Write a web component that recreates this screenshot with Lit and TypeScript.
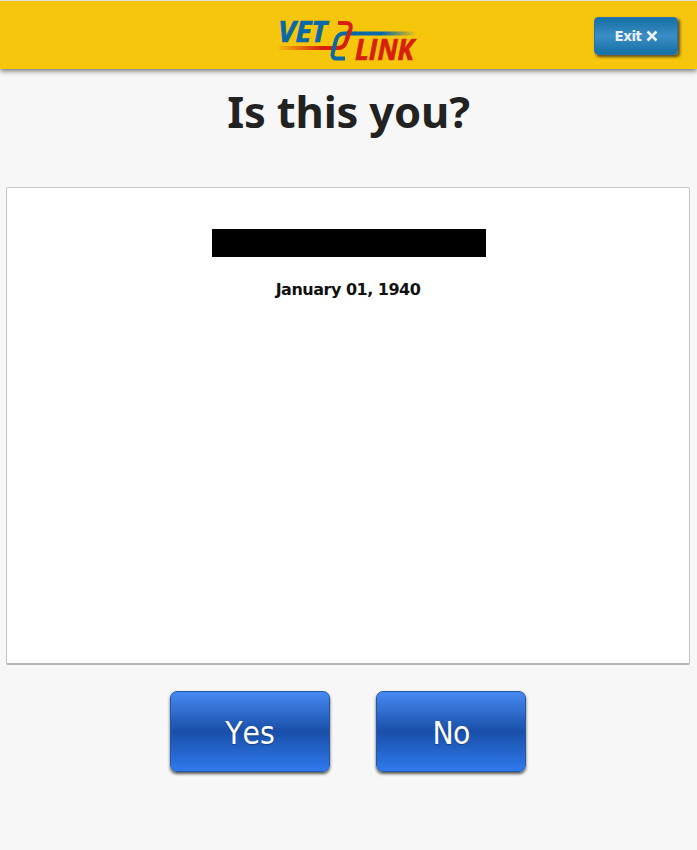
import { LitElement, html, css } from "lit";
import { customElement } from "lit/decorators.js";

@customElement("vetlink-logo")
class VetlinkLogo extends LitElement {
  static styles = css`
    :host { display: block; width: 155px; height: 65px; }
    svg { display: block; }
    .word { font: italic 700 29px "Open Sans", "Noto Sans", sans-serif; stroke-width: .7; }
    .blue { fill: #0868a8; stroke: #0868a8; }
    .red { fill: #d6200c; stroke: #d6200c; }
    .stroke { fill: none; stroke-width: 4; stroke-linejoin: round; }
  `;
  render() {
    return html`<svg width="155" height="65" viewBox="0 0 155 65" role="img" aria-label="Vet Link">
      <defs>
        <linearGradient id="r" gradientUnits="userSpaceOnUse" x1="5" y1="0" x2="52" y2="0">
          <stop offset="0" stop-color="#d6200c" stop-opacity="0" />
          <stop offset="1" stop-color="#d6200c" />
        </linearGradient>
        <linearGradient id="b" gradientUnits="userSpaceOnUse" x1="112" y1="0" x2="147" y2="0">
          <stop offset="0" stop-color="#0868a8" />
          <stop offset="1" stop-color="#0868a8" stop-opacity="0" />
        </linearGradient>
      </defs>
      <text class="word blue" x="8" y="32" textLength="49" lengthAdjust="spacingAndGlyphs">VET</text>
      <text class="word red" x="85" y="50" textLength="59" lengthAdjust="spacingAndGlyphs">LINK</text>
      <rect x="9" y="36" width="56" height="4" fill="url(#r)" />
      <path class="stroke" stroke="#d6200c" d="M64 38H68Q74 38 76 32L79 21" />
      <path class="stroke" stroke="#0868a8" d="M85 23.500H74Q68 23.500 66 30L63 42Q61 48.500 67 48.500H75" />
      <path class="stroke" stroke="#d6200c" d="M68 13H76Q82 13 80.500 19L77 30" />
      <rect x="84" y="21.500" width="62" height="4" fill="url(#b)" />
    </svg>`;
  }
}

@customElement("app-root")
class AppRoot extends LitElement {
  static styles = css`
    :host {
      display: flex; flex-direction: column; box-sizing: border-box; height: 850px;
      background: #f7f7f7; color: #222; font-family: "Noto Sans", sans-serif;
    }
    * { box-sizing: border-box; }
    header {
      display: grid; grid-template-columns: 1fr 155px 1fr; flex: none; height: 69px;
      padding-top: 9px; background: #f5c60c; border-top: 1px solid #dedede;
      box-shadow: 0 2px 5px rgba(0, 0, 0, .55);
    }
    vetlink-logo { margin-left: -1px; }
    button { color: #fff; padding: 0; }
    .exit {
      justify-self: end; width: 84px; height: 38px; margin: 7px 19px 0 0;
      display: flex; align-items: center; justify-content: center; gap: 4px;
      border: 1px solid #2e6fb4; border-radius: 4px; color: #eaf1f7;
      background: linear-gradient(#1470a3, #3b8dc6 50%, #1470a3);
      box-shadow: 2px 2px 3px rgba(40, 35, 40, .75);
      font-family: "DejaVu Sans", sans-serif;
      font-weight: 700; font-size: 13.500px; letter-spacing: -.5px;
    }
    .exit svg { display: block; }
    h1 {
      flex: none; margin: 12px 0 0; height: 60px; line-height: 60px; text-align: center;
      font-size: 43.500px; font-weight: 700; letter-spacing: -.15px;
    }
    .card {
      flex: none; height: 478px; margin: 46px 7px 0 6px; padding-top: 41px;
      display: flex; flex-direction: column; align-items: center;
      background: #fff; border: 1px solid #c6c6c6; border-bottom: 2px solid #b5b5b5; border-radius: 2px;
    }
    .redacted { width: 274px; height: 28px; margin-left: 2px; background: #000; }
    .date {
      margin: 21px 0 0; line-height: 24px; color: #111; white-space: nowrap;
      font-family: "DejaVu Sans", sans-serif;
      font-size: 16px; font-weight: 700; letter-spacing: -.5px;
    }
    .actions { display: flex; justify-content: center; gap: 46px; margin: 26px 1px 0 0; }
    .choice {
      width: 160px; height: 81px; border: 1px solid #2458a5; border-radius: 7px;
      background: linear-gradient(#478af2, #194fa8 50%, #307aee);
      box-shadow: 0 2px 3px rgba(0, 0, 0, .65);
      font-family: "DejaVu Sans Condensed", "DejaVu Sans", sans-serif; font-stretch: condensed;
      font-size: 31.500px; font-kerning: none; padding-top: 3px;
      text-shadow: 0 1px 1px rgba(0, 0, 0, .3);
    }
    .no { width: 150px; letter-spacing: -.8px; }
  `;
  render() {
    return html`
      <header>
        <span></span>
        <vetlink-logo></vetlink-logo>
        <button class="exit">Exit
          <svg width="12" height="12" viewBox="0 0 12 12"><path d="M1.500 1.500L10.500 10.500M10.500 1.500L1.500 10.500" stroke="#eaf1f7" stroke-width="2.600" /></svg>
        </button>
      </header>
      <h1>Is this you?</h1>
      <section class="card">
        <div class="redacted"></div>
        <p class="date">January 01, 1940</p>
      </section>
      <div class="actions">
        <button class="choice">Yes</button>
        <button class="choice no">No</button>
      </div>
    `;
  }
}
